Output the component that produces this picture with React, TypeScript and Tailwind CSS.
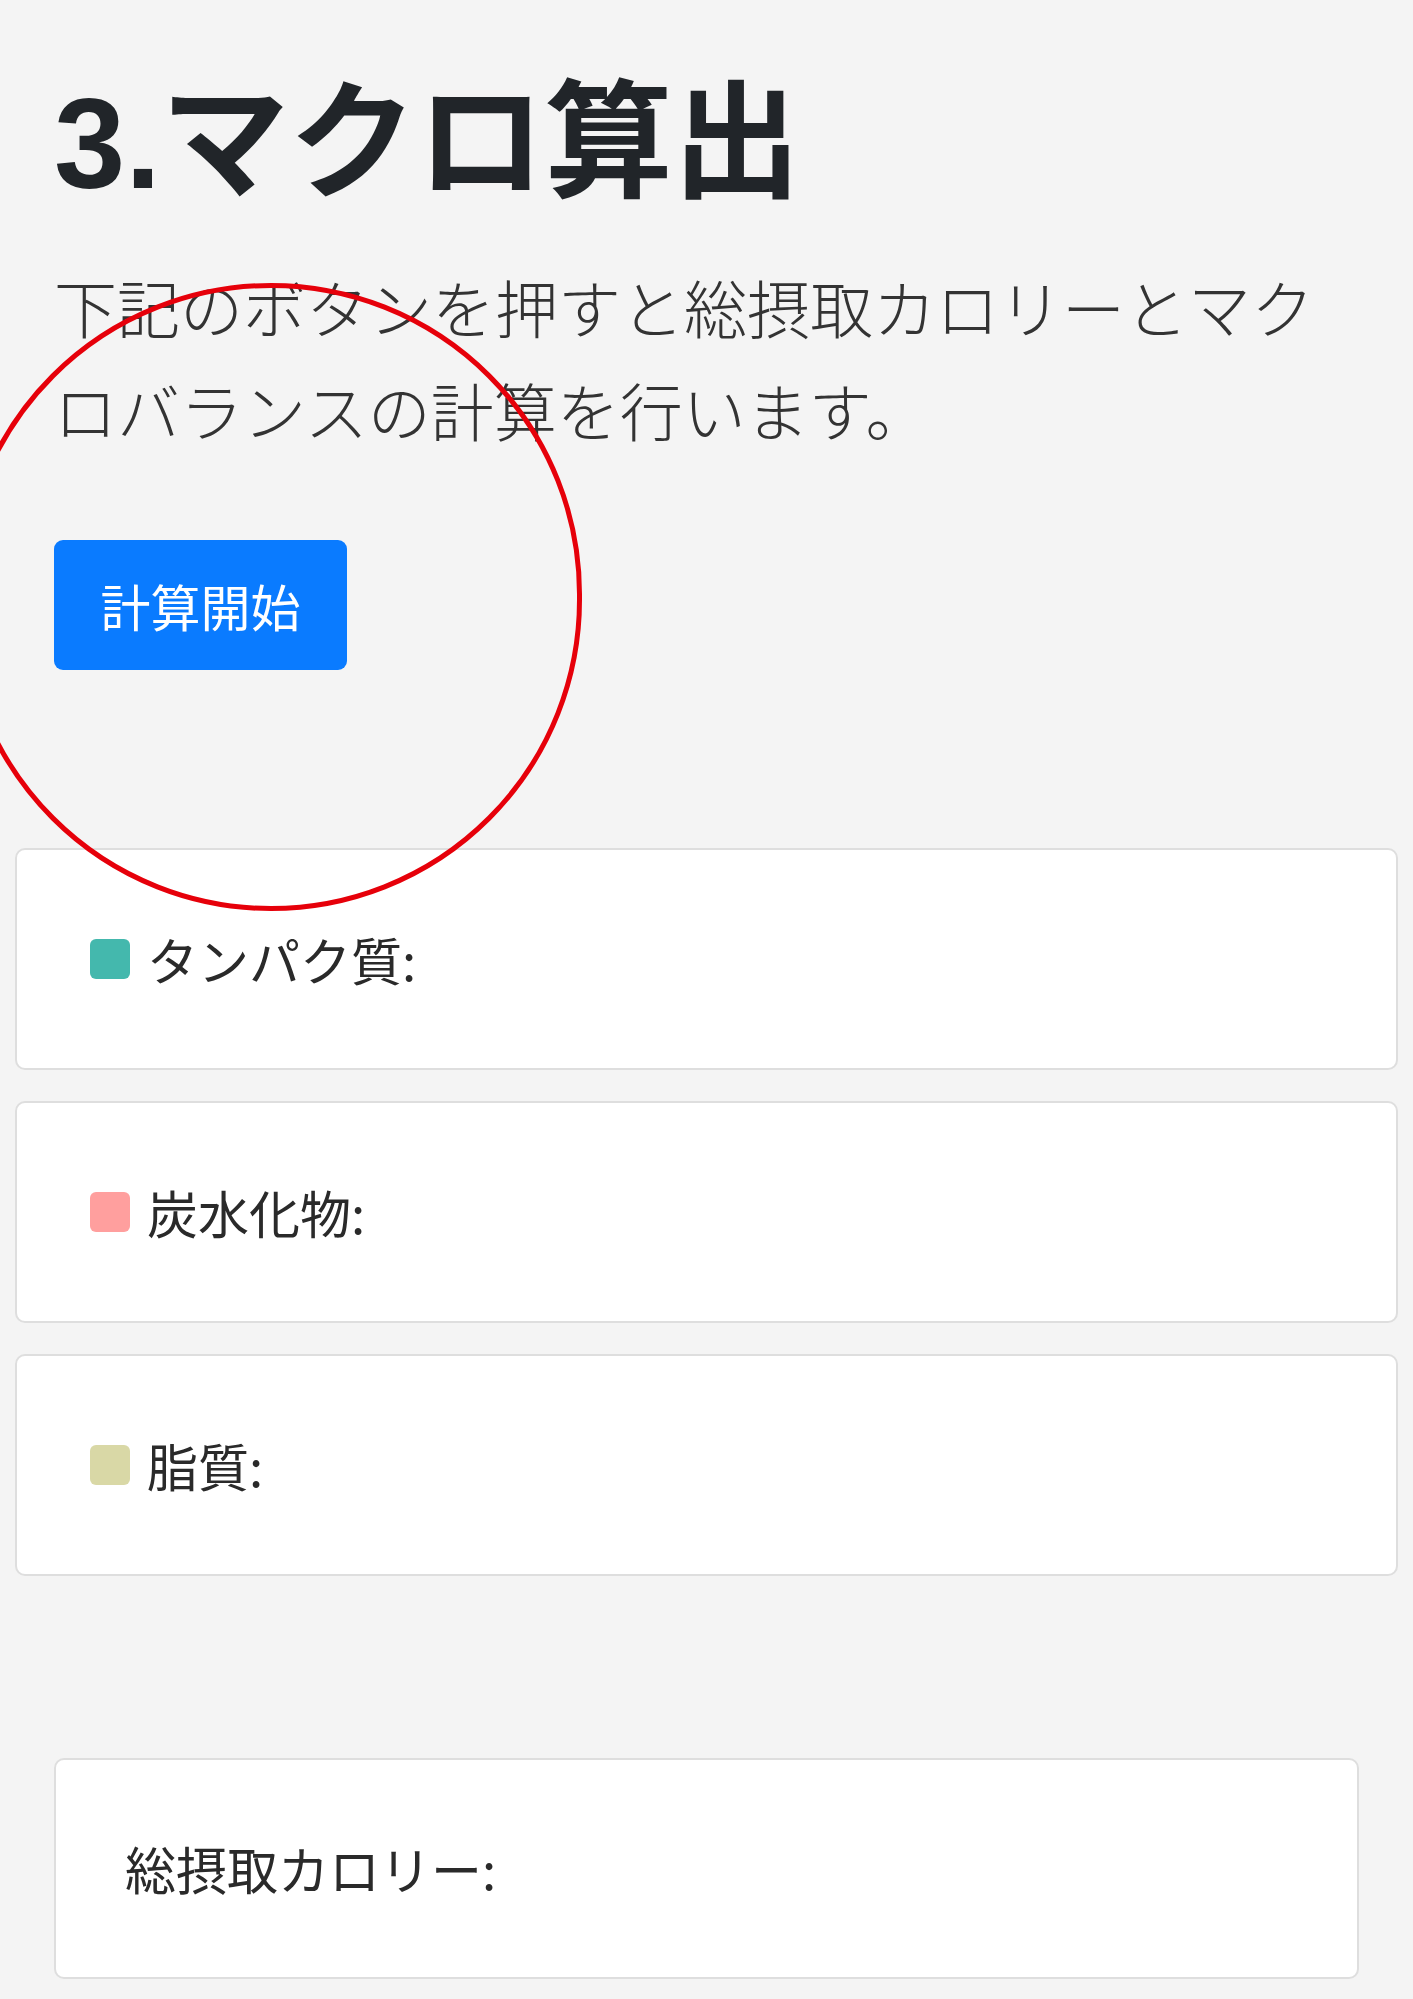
import React from "react";

const font = { fontFamily: '"Noto Sans CJK JP", "Noto Sans", sans-serif' };

interface MacroRowProps {
    label: string;
    color: string;
}

function MacroRow({ label, color }: MacroRowProps) {
    return (
        <div className="flex h-[222px] items-center rounded-[10px] border-2 border-[#dedede] bg-white pl-[73px]">
            <span className={`h-[40px] w-[40px] shrink-0 rounded-[6px] ${color}`} />
            <span className="ml-[17px] text-[51px] leading-none text-[#2a2a2a]">{label}</span>
        </div>
    );
}

export default function App() {
    return (
        <div className="relative min-h-[1999px] overflow-hidden bg-[#f4f4f4]" style={font}>
            <div className="px-[54px] pt-[68px]">
                <h1
                    className="text-[128px] font-bold leading-[152px] text-[#212529]"
                    style={{ fontFamily: '"Liberation Sans", "Noto Sans CJK JP", sans-serif' }}
                >
                    3.マクロ算出
                </h1>
                <p className="mt-[34px] text-[63px] font-light leading-[103px] text-[#333333]">
                    下記のボタンを押すと総摂取カロリーとマクロバランスの計算を行います。
                </p>
                <button className="mt-[80px] block h-[130px] w-[293px] rounded-[9px] bg-[#0a7bff] text-[50px] text-white">
                    計算開始
                </button>
            </div>

            <div className="mt-[178px] flex flex-col gap-[31px] px-[15px]">
                <MacroRow label="タンパク質:" color="bg-[#44b8ad]" />
                <MacroRow label="炭水化物:" color="bg-[#ff9f9e]" />
                <MacroRow label="脂質:" color="bg-[#d9d8a6]" />
            </div>

            <div className="mt-[182px] px-[54px]">
                <div className="flex h-[221px] items-center rounded-[10px] border-2 border-[#dedede] bg-white pl-[69px]">
                    <span className="text-[51px] leading-none text-[#2a2a2a]">総摂取カロリー:</span>
                </div>
            </div>

            {/* hand-drawn red annotation circle */}
            <div className="pointer-events-none absolute left-[-40px] top-[283px] h-[628px] w-[622px] rounded-full border-[5px] border-[#e6000a]" />
        </div>
    );
}
